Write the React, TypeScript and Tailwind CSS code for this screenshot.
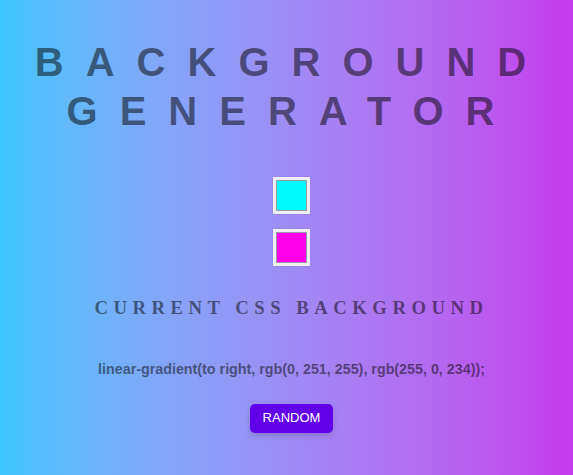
import React, { useState } from "react";

const swatch = (hex: string) => (
  <div className="w-[37px] h-[37px] bg-[#efeff1] p-[3px] shadow-[0_0_1px_rgba(0,0,0,0.2)]">
    <div className="w-full h-full border border-[#9a9aa4]" style={{ backgroundColor: hex }} />
  </div>
);

export default function App() {
  const [c1] = useState("#00fbff");
  const [c2] = useState("#ff00ea");

  return (
    <div className="min-h-[475px] w-full pl-[10px] bg-gradient-to-r from-[#3ac5fb] to-[#c33aed] text-center font-['Liberation_Sans',Arial,sans-serif]">
      {/* Title */}
      <h1 className="pt-[38px] text-[40px] leading-[49px] font-bold tracking-[22px] text-black/50">
        BACKGROUND
        <br />
        GENERATOR
      </h1>

      {/* Colour pickers */}
      <div className="flex flex-col items-center gap-[15px] mt-[41px]">
        {swatch(c1)}
        {swatch(c2)}
      </div>

      {/* Current CSS */}
      <h3 className="mt-[28px] font-['Liberation_Serif',serif] text-[18.72px] font-bold tracking-[5.5px] text-black/50">
        CURRENT CSS BACKGROUND
      </h3>

      <p className="mt-[37px] text-[14.3px] font-bold text-black/50">
        linear-gradient(to right, rgb(0, 251, 255), rgb(255, 0, 234));
      </p>

      <div className="mt-[23px] flex justify-center">
        <button className="w-[83px] h-[29px] rounded-[5px] bg-[#6200ea] text-white text-[13px] font-medium shadow-[0_3px_6px_rgba(0,0,0,0.15)]">
          RANDOM
        </button>
      </div>
    </div>
  );
}
